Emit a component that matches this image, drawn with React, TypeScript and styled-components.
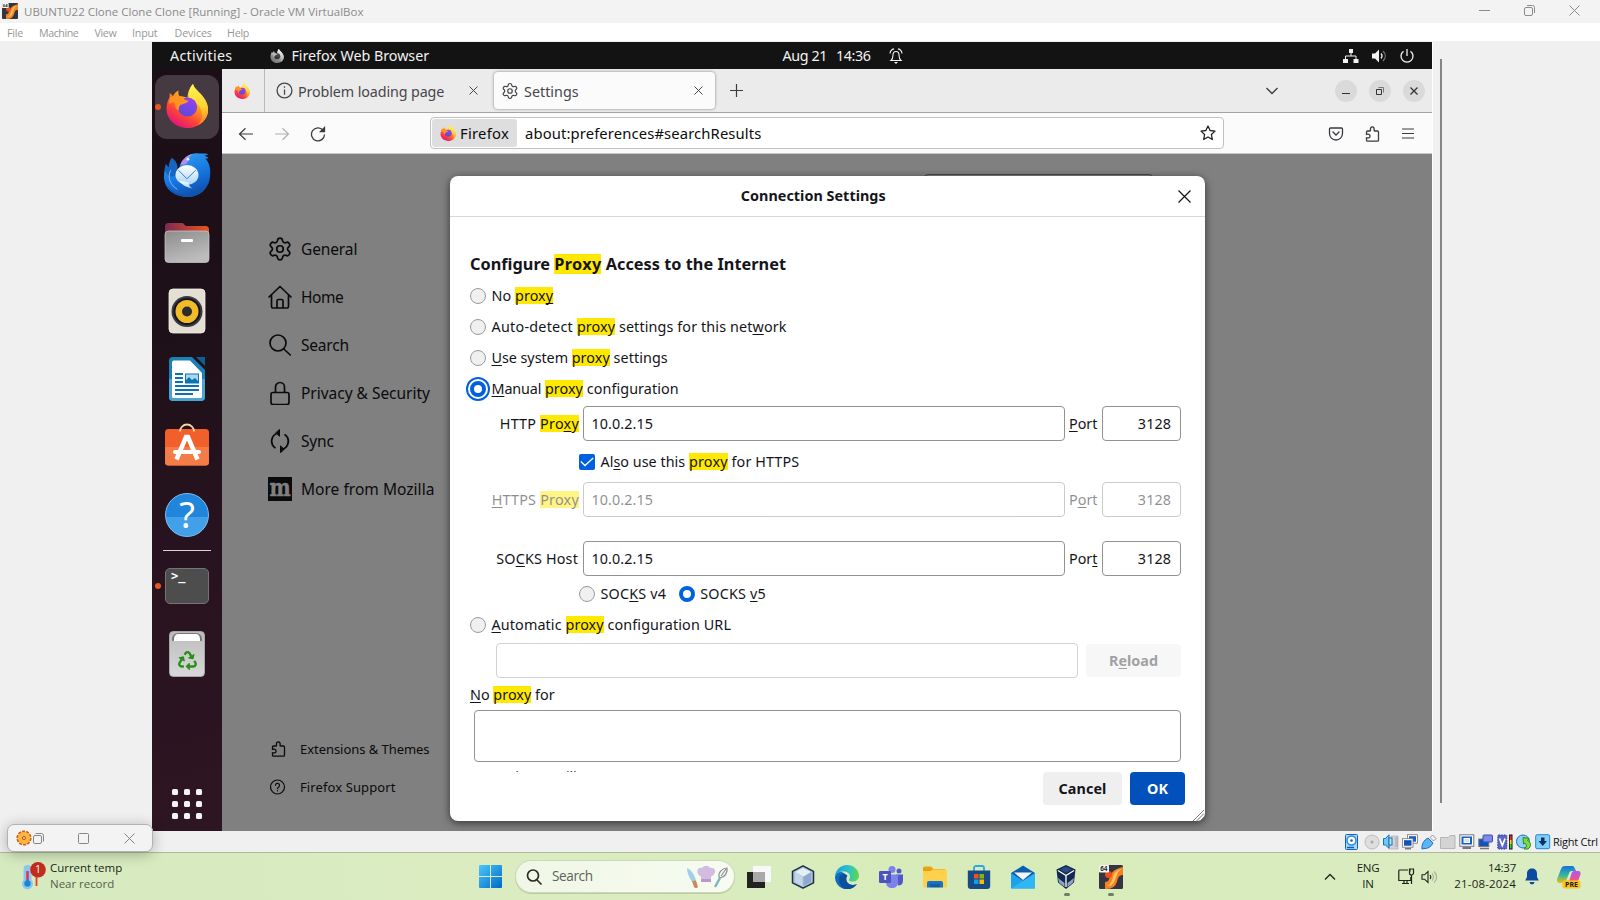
import React from 'react';
import styled, { createGlobalStyle, css } from 'styled-components';
import { Settings } from 'lucide-react';
import { FaRecycle } from 'react-icons/fa';

const GlobalStyle = createGlobalStyle`
  * { box-sizing: border-box; }
  body { margin: 0; background: #f0f0f0; overflow: hidden; }
  svg { display: block; flex: none; }
`;

const guestFont = `"Noto Sans", "Open Sans", sans-serif`;
const hostFont = `"Open Sans", "Noto Sans", sans-serif`;

/* ---------- host window ---------- */

const Screen = styled.div`
  width: 1600px;
  height: 900px;
  display: flex;
  flex-direction: column;
  background: #f0f0f0;
  font-family: ${hostFont};
  position: relative;
  overflow: hidden;
`;

const TitleBar = styled.header`
  height: 23px;
  flex: none;
  display: flex;
  align-items: center;
  background: #f3f3f3;
  padding: 0 20px 2px 2px;
  color: #8b8b8b;
  font-size: 11.5px;
`;

const WindowTitle = styled.span`
  margin-left: 6px;
  flex: 1;
  line-height: 20px;
  padding-top: 2px;
`;

const HostControls = styled.div`
  display: flex;
  align-items: center;
  gap: 34px;
`;

const MenuBar = styled.nav`
  height: 18px;
  flex: none;
  display: flex;
  align-items: center;
  background: #fff;
  color: #979797;
  font-size: 10.7px;
  padding: 2px 0 0 7px;
  line-height: 16px;
`;

const MenuItem = styled.span<{ $w: number; $ls: number }>`
  width: ${(p) => p.$w}px;
  letter-spacing: ${(p) => p.$ls}px;
  white-space: nowrap;
`;

const Viewport = styled.main`
  flex: none;
  height: 790px;
  padding: 1px 0 0 152px;
  display: flex;
`;

const Guest = styled.section`
  width: 1280px;
  height: 789px;
  display: flex;
  flex-direction: column;
  font-family: ${guestFont};
  box-shadow: 1px 0 0 #fff;
`;

const ViewportScroll = styled.div`
  width: 2px;
  height: 744px;
  margin: 17px 0 0 8px;
  background: #858585;
`;

/* ---------- guest top bar ---------- */

const TopBar = styled.div`
  height: 27px;
  flex: none;
  background: #131313;
  color: #f2f2f2;
  display: grid;
  grid-template-columns: 1fr auto 1fr;
  align-items: center;
  font-size: 14.3px;
  line-height: 26px;
  padding: 0 18px 0 18px;
`;

const TopLeft = styled.div`
  display: flex;
  align-items: center;
`;

const AppName = styled.div`
  display: flex;
  align-items: center;
  gap: 7px;
  margin-left: 38px;
  letter-spacing: -0.03px;
`;

const Clock = styled.div`
  display: flex;
  align-items: center;
  letter-spacing: -0.4px;
  margin-left: 102px;
  gap: 9px;
`;

const BellSlot = styled.div`
  margin-left: 10px;
`;

const TopRight = styled.div`
  display: flex;
  justify-content: flex-end;
  align-items: center;
  gap: 13px;
`;

const Spaced = styled.span<{ $ls: number }>`
  letter-spacing: ${(p) => p.$ls}px;
  white-space: pre;
`;

const Desktop = styled.div`
  flex: 1;
  display: flex;
  min-height: 0;
`;

/* ---------- dock ---------- */

const Dock = styled.aside`
  width: 70px;
  flex: none;
  display: flex;
  flex-direction: column;
  align-items: center;
  padding-top: 6px;
  background: linear-gradient(165deg, #1b0e17 0%, #1e1019 35%, #27131f 62%, #2e1522 100%);
`;

const DockTile = styled.div<{ $active?: boolean; $running?: boolean; $lift?: number }>`
  width: 64px;
  height: 64px;
  margin-bottom: 4px;
  padding-bottom: ${(p) => p.$lift ?? 0}px;
  border-radius: 12px;
  display: flex;
  flex: none;
  align-items: center;
  justify-content: center;
  position: relative;
  background: ${(p) => (p.$active ? '#453a41' : 'transparent')};
  ${(p) =>
    p.$running &&
    css`
      &::before {
        content: '';
        position: absolute;
        left: 0;
        top: 29px;
        width: 6px;
        height: 6px;
        border-radius: 50%;
        background: #e95420;
      }
    `}
`;

const DockRule = styled.div`
  width: 48px;
  height: 1px;
  flex: none;
  margin: -1px 0 3px;
  background: #d8d2d5;
`;

const AppGrid = styled.div`
  display: grid;
  grid-template-columns: repeat(3, 6px);
  gap: 6px;
  margin-top: auto;
  margin-bottom: 12px;
  & > i {
    height: 6px;
    border-radius: 1.5px;
    background: #f4f2f3;
  }
`;

/* ---------- browser ---------- */

const Browser = styled.div`
  flex: 1;
  display: flex;
  flex-direction: column;
  color: #15141a;
`;

const TabStrip = styled.div`
  height: 44px;
  flex: none;
  background: #ebebeb;
  border-bottom: 1px solid #a3a3a3;
  display: flex;
  align-items: center;
  font-size: 14.3px;
  color: #46464b;
`;

const PinnedTab = styled.div`
  width: 43px;
  height: 43px;
  padding-left: 12px;
  border-right: 1px solid #b9b9b9;
  display: flex;
  align-items: center;
`;

const Tab = styled.div<{ $selected?: boolean }>`
  display: flex;
  align-items: center;
  ${(p) =>
    p.$selected
      ? css`
          width: 221px;
          height: 37px;
          margin: 0 15px 0 7px;
          padding: 0 12px 0 7px;
          background: #fbfbfb;
          border-radius: 4px;
          box-shadow: 0 0 3px rgba(0, 0, 0, 0.45);
        `
      : css`
          width: 222px;
          height: 43px;
          padding: 0 9px 0 11px;
        `}
`;

const TabLabel = styled.span<{ $ls: number }>`
  flex: 1;
  padding-top: 1px;
  margin-left: 5px;
  letter-spacing: ${(p) => p.$ls}px;
  white-space: nowrap;
`;

const StripEnd = styled.div`
  margin-left: auto;
  display: flex;
  align-items: center;
  padding-right: 7px;
`;

const RoundButton = styled.div`
  width: 22px;
  height: 22px;
  margin-left: 12px;
  border-radius: 50%;
  background: #dadada;
  display: flex;
  align-items: center;
  justify-content: center;
`;

const ChevronSlot = styled.div`
  margin-right: 45px;
`;

const NavBar = styled.div`
  height: 41px;
  flex: none;
  background: #fbfbfb;
  border-bottom: 1px solid #c9c9c9;
  display: flex;
  align-items: center;
  padding: 0 16px 0 16px;
`;

const NavButtons = styled.div`
  width: 192px;
  display: flex;
  align-items: center;
  gap: 20px;
  padding-top: 1px;
`;

const UrlBar = styled.div`
  width: 794px;
  height: 32px;
  border: 1px solid #c1c1c1;
  border-radius: 4px;
  background: #fff;
  display: flex;
  align-items: center;
  padding: 0 7px 0 1px;
  font-size: 14.8px;
  line-height: 20px;
  color: #0c0c0d;
`;

const Identity = styled.div`
  width: 85px;
  height: 28px;
  margin-right: 8px;
  border-radius: 3px;
  background: #dedede;
  display: flex;
  align-items: center;
  gap: 4px;
  padding-left: 8px;
  letter-spacing: 0.25px;
`;

const UrlText = styled.span`
  flex: 1;
  letter-spacing: 0.12px;
`;

const NavTools = styled.div`
  margin-left: auto;
  display: flex;
  align-items: center;
  gap: 20px;
  padding-top: 1px;
`;

const Page = styled.div`
  flex: 1;
  background: #808080;
  position: relative;
  display: flex;
`;

const Sidebar = styled.nav`
  width: 228px;
  padding: 71px 0 0 46px;
  display: flex;
  flex-direction: column;
  color: #0b0a0d;
`;

const NavEntry = styled.div<{ $ls: number }>`
  height: 48px;
  display: flex;
  align-items: center;
  gap: 9px;
  font-size: 15.5px;
  letter-spacing: ${(p) => p.$ls}px;
  white-space: nowrap;
`;

const GearIcon = styled(Settings)`
  margin: 0 -1px;
`;

const FootEntry = styled.div`
  height: 38px;
  display: flex;
  align-items: center;
  gap: 14px;
  padding-left: 2px;
  font-size: 13px;
  white-space: nowrap;
`;

const FootNav = styled.div`
  margin-top: auto;
  margin-bottom: 25px;
`;

const PageSearch = styled.div`
  position: absolute;
  left: 702px;
  top: 20px;
  width: 229px;
  height: 32px;
  border: 1px solid #48484a;
  border-radius: 4px;
`;

/* ---------- dialog ---------- */

const Dialog = styled.div`
  position: absolute;
  left: 228px;
  top: 22px;
  width: 755px;
  height: 645px;
  background: #fff;
  border-radius: 8px;
  box-shadow: 0 2px 8px rgba(0, 0, 0, 0.6);
  display: flex;
  flex-direction: column;
  font-size: 14.35px;
`;

const DialogHead = styled.div`
  height: 41px;
  flex: none;
  border-bottom: 1px solid #d8d8da;
  display: flex;
  align-items: center;
  padding: 0 14.5px 0 0;
`;

const DialogTitle = styled.div`
  flex: 1;
  text-align: center;
  font-weight: 700;
  letter-spacing: 0.04px;
  line-height: 20px;
  padding-right: 1px;
`;

const DialogBody = styled.div`
  height: 555px;
  flex: none;
  overflow: hidden;
  padding: 37px 24px 0 20px;
  line-height: 17px;
`;

const Heading = styled.h2`
  margin: 0 0 14px;
  font-size: 16.3px;
  line-height: 20px;
  font-weight: 700;
  letter-spacing: 0.02px;
`;

const Mark = styled.mark<{ $ls?: number }>`
  display: inline-block;
  background: #ffe900;
  color: inherit;
  line-height: inherit;
  letter-spacing: ${(p) => p.$ls ?? 0.06}px;
`;

const Key = styled.u`
  text-decoration: underline;
  text-decoration-thickness: 1px;
  text-underline-offset: 2px;
  text-decoration-skip-ink: none;
`;

const Choice = styled.label`
  height: 16px;
  display: flex;
  align-items: flex-start;
  gap: 5.5px;
  white-space: pre;
`;

const ChoiceText = styled.span<{ $ls?: number }>`
  margin-top: -1px;
  letter-spacing: ${(p) => p.$ls ?? 0.08}px;
`;

const ChoiceList = styled.div`
  display: flex;
  flex-direction: column;
  gap: 15px;
`;

const Radio = styled.span<{ $checked?: boolean; $focus?: boolean }>`
  width: 16px;
  height: 16px;
  flex: none;
  border-radius: 50%;
  background: ${(p) => (p.$checked ? '#fff' : '#f0f0f0')};
  border: ${(p) => (p.$checked ? '4px solid #0060df' : '1px solid #9a9a9c')};
  ${(p) => p.$focus && 'box-shadow: 0 0 0 2px #fff, 0 0 0 4px #0060df;'}
`;

const Checkbox = styled.span`
  width: 16px;
  height: 16px;
  flex: none;
  border-radius: 2px;
  background: #0060df;
  display: flex;
  align-items: center;
  justify-content: center;
`;

const ProxyRow = styled.div<{ $top: number; $disabled?: boolean }>`
  margin-top: ${(p) => p.$top}px;
  display: grid;
  grid-template-columns: 109px 482px 29px 79px;
  column-gap: 4px;
  align-items: center;
  opacity: ${(p) => (p.$disabled ? 0.48 : 1)};
`;

const RowLabel = styled.span<{ $ls?: number; $pad?: number }>`
  text-align: right;
  white-space: pre;
  letter-spacing: ${(p) => p.$ls ?? 0.2}px;
  padding-right: ${(p) => p.$pad ?? 0}px;
`;

const Field = styled.div<{ $numeric?: boolean; $faint?: boolean }>`
  height: 35px;
  border: 1px solid ${(p) => (p.$faint ? '#d2d2d2' : '#929294')};
  border-radius: 4px;
  display: flex;
  align-items: center;
  justify-content: ${(p) => (p.$numeric ? 'flex-end' : 'flex-start')};
  padding: 0 9px 0 7.5px;
  letter-spacing: 0.08px;
`;

const Indent = styled.div<{ $left: number; $top: number }>`
  margin: ${(p) => p.$top}px 0 0 ${(p) => p.$left}px;
  display: flex;
  gap: 12.5px;
`;

const UrlRow = styled.div`
  margin: 10px 0 8px 26px;
  display: grid;
  grid-template-columns: 582px 95px;
  column-gap: 8px;
  align-items: center;
`;

const Reload = styled.div`
  height: 33px;
  border-radius: 4px;
  background: #f7f7f7;
  color: #a1a1a3;
  font-weight: 700;
  text-align: center;
  line-height: 33px;
`;

const TextArea = styled.div`
  height: 52px;
  margin: 7px 0 5px 4px;
  border: 1px solid #929294;
  border-radius: 4px;
`;

const Example = styled.div`
  line-height: 20px;
  white-space: nowrap;
  letter-spacing: -0.14px;
  color: #3c3b42;
`;

const DialogFoot = styled.div`
  flex: 1;
  display: flex;
  justify-content: flex-end;
  gap: 8px;
  padding-right: 20px;
  position: relative;
`;

const Button = styled.div<{ $primary?: boolean }>`
  width: ${(p) => (p.$primary ? 55 : 79)}px;
  height: 33px;
  border-radius: 4px;
  line-height: 33px;
  text-align: center;
  font-weight: 700;
  letter-spacing: 0.1px;
  background: ${(p) => (p.$primary ? '#0250bb' : '#efeff0')};
  color: ${(p) => (p.$primary ? '#fff' : '#15141a')};
`;

const Grip = styled.div`
  position: absolute;
  right: 1px;
  bottom: 0;
`;

/* ---------- status bar ---------- */

const StatusBar = styled.div`
  height: 21px;
  flex: none;
  display: flex;
  align-items: center;
  justify-content: flex-end;
  gap: 3px;
  padding-right: 1px;
  color: #111;
  font-size: 11px;
`;

const HostKey = styled.span`
  width: 46px;
  margin-left: -1px;
  letter-spacing: -0.25px;
  white-space: nowrap;
`;

const MiniToolbar = styled.div`
  position: absolute;
  left: 7px;
  top: 824px;
  width: 146px;
  height: 28px;
  border: 1px solid #b2b2b2;
  border-radius: 7px;
  background: #f3f3f3;
  box-shadow: 0 2px 14px rgba(0, 0, 0, 0.28);
  display: flex;
  align-items: center;
  padding-left: 8px;
`;

const MiniIcon = styled.div<{ $ml: number }>`
  margin-left: ${(p) => p.$ml}px;
`;

/* ---------- taskbar ---------- */

const Taskbar = styled.footer`
  height: 48px;
  flex: none;
  position: relative;
  border-top: 1px solid #acbb98;
  background: linear-gradient(90deg, #d6eac0 0%, #dbecc0 35%, #d7ecba 60%, #dbecc2 100%);
  display: flex;
  align-items: center;
  color: #1b1f17;
  font-size: 11.5px;
  line-height: 16px;
`;

const Weather = styled.div`
  width: 479px;
  padding-left: 20px;
  display: flex;
  align-items: center;
  gap: 3px;
`;

const WeatherText = styled.div`
  letter-spacing: -0.03px;
  padding-bottom: 2px;
  & > div + div { color: #55604c; }
`;

const SearchPill = styled.div`
  width: 218px;
  height: 31px;
  margin: 0 13px 0 14px;
  border-radius: 16px;
  background: linear-gradient(90deg, #f0f7e6, #f7fbf1);
  box-shadow: 0 0 0 1px #cbdab4, 0 1px 0 1px #bccba6;
  display: flex;
  align-items: center;
  padding: 0 5px 0 10px;
  font-size: 13.6px;
  color: #5d6357;
`;

const PillText = styled.span`
  flex: 1;
  margin-left: 10px;
  padding-bottom: 1px;
  letter-spacing: -0.4px;
`;

const AppRow = styled.div`
  display: flex;
  gap: 20px;
`;

const App24 = styled.div<{ $open?: boolean }>`
  width: 24px;
  height: 24px;
  position: relative;
  ${(p) =>
    p.$open &&
    css`
      &::after {
        content: '';
        position: absolute;
        left: 9px;
        bottom: -7px;
        width: 6px;
        height: 3px;
        border-radius: 2px;
        background: #6f7f62;
      }
    `}
`;

const Tray = styled.div`
  margin-left: auto;
  display: flex;
  align-items: center;
  padding-right: 19px;
`;

const TrayText = styled.div<{ $w: number; $align: string; $ls: number }>`
  width: ${(p) => p.$w}px;
  padding-bottom: 2px;
  text-align: ${(p) => p.$align};
  letter-spacing: ${(p) => p.$ls}px;
`;

const Gap = styled.div<{ $w: number }>`
  width: ${(p) => p.$w}px;
`;

/* ---------- drawings ---------- */

const FirefoxLogo = ({ size, id, gray }: { size: number; id: string; gray?: boolean }) => {
  const c = gray
    ? ['#f4f4f4', '#bdbdbd', '#8a8a8a', '#777', '#4a4a4a', '#333']
    : ['#fff44f', '#ffa018', '#ff4438', '#e0127d', '#9a3ff0', '#5b4bd6'];
  return (
    <svg width={size} height={size} viewBox="0 0 44 44">
      <defs>
        <linearGradient id={`${id}a`} x1="0.8" y1="0.08" x2="0.25" y2="0.98">
          <stop offset="0.05" stopColor={c[0]} />
          <stop offset="0.38" stopColor={c[1]} />
          <stop offset="0.7" stopColor={c[2]} />
          <stop offset="1" stopColor={c[3]} />
        </linearGradient>
        <linearGradient id={`${id}b`} x1="0.7" y1="0" x2="0.3" y2="1">
          <stop offset="0" stopColor={c[4]} />
          <stop offset="1" stopColor={c[5]} />
        </linearGradient>
        <linearGradient id={`${id}c`} x1="0.5" y1="0" x2="0.6" y2="1">
          <stop offset="0" stopColor={c[0]} />
          <stop offset="0.6" stopColor={gray ? '#ccc' : '#ffd030'} />
          <stop offset="1" stopColor={gray ? '#aaa' : '#ff7a28'} />
        </linearGradient>
      </defs>
      <path
        fill={`url(#${id}a)`}
        d="M28 0c1 5 7 8 10.500 13.500C42 18 43 22 43 26c0 10-9 18-20.500 18S1.500 35.500 1.500 25c0-5 1-8 3-11.500L4.800 9 8 12c1.300-2.500 3-4.300 5.500-5.500-.5 2.500 0 4.500 1 5.500 3 0 6 1 8 2 0-6 2.500-11 5.500-14z"
      />
      <path
        fill={`url(#${id}c)`}
        d="M28 0c1 5 7 8 10.500 13.500C42 18 43 22 43 26c0 7-4 12-10 15 4-5 5-10 3-15-1-5-6-8-10-10-4-3-2-11 2-16z"
      />
      <circle cx="22.500" cy="23" r="9.600" fill={`url(#${id}b)`} />
      <path
        fill={gray ? '#b5b5b5' : '#ff9420'}
        d="M5 13.500c3-1.500 6-1.500 9-1 3 .2 5 1.500 5.500 3 1.500.6 3 .8 4 1.300-.5 2-4 3-7 3.700-2.500.7-2.500 3-3 6-3-1-4-5-3.500-8-2-.5-4 0-6 1.500z"
      />
    </svg>
  );
};

const Cross = ({ size, color, w = 1 }: { size: number; color: string; w?: number }) => (
  <svg width={size} height={size} viewBox={`0 0 ${size} ${size}`} stroke={color} strokeWidth={w} fill="none">
    <path d={`M.5 .5L${size - 0.5} ${size - 0.5}M${size - 0.5} .5L.5 ${size - 0.5}`} />
  </svg>
);

const Puzzle = ({ color = '#3b3b40' }: { color?: string }) => (
  <svg width="16" height="16" viewBox="0 0 16 16" fill="none" stroke={color} strokeWidth="1.3">
    <path d="M2.500 7.600V6a1 1 0 0 1 1-1h2.400c.6 0 .7-.4.600-.9C6.200 2.600 6.800.8 8.300.8s2.100 1.800 1.800 3.300c-.1.500 0 .9.600.9h2.800a1 1 0 0 1 1 1v8.200a1 1 0 0 1-1 1h-10a1 1 0 0 1-1-1v-2.400c1.700.4 3.600.1 3.600-1.700S4.200 7.900 2.500 8.400z" />
  </svg>
);

const Thunderbird = () => (
  <svg width="48" height="46" viewBox="0 0 50 48">
    <defs>
      <linearGradient id="tb" x1="0.2" y1="0" x2="0.6" y2="1">
        <stop offset="0" stopColor="#2fa1f5" />
        <stop offset="0.6" stopColor="#1573dc" />
        <stop offset="1" stopColor="#0f4da8" />
      </linearGradient>
      <linearGradient id="tbe" x1="0" y1="0" x2="0" y2="1">
        <stop offset="0" stopColor="#fff" />
        <stop offset="1" stopColor="#a9d4fb" />
      </linearGradient>
    </defs>
    <path fill="#1566c0" d="M9 6c5 3 7 8 6 15L6 34C0 25 1 18 3 12c1 2 2 3 3 4 0-4 1-7 3-10z" />
    <path fill="url(#tb)" d="M18 13C21 5 30 0 38 1.500c3 0 7 0 9 .5-1 1-3 1.500-4 2 2 .5 4 1.500 4.500 2.500-1 0-2 .3-3 .5C49 12 50 19 49 26c-1 12-11 21-24 21S2 39 1 28c0-3 0-6 1-9 3 9 10 8 13 2z" />
    <path fill="#b58cf0" d="M18 13c3-6 7-10 13-11-4 3-5 6-6 10-3 1-5 2-7 1z" />
    <path fill="#0f55b0" d="M4 34c5 8 13 11 21 11s18-5 22-13c-3 10-12 15-22 15S7 42 4 34z" />
    <ellipse cx="25" cy="24" rx="12" ry="10.500" fill="url(#tbe)" />
    <path fill="url(#tbe)" d="M17 30c3 5 8 7 14 8-3-1-4-3-4-6z" />
    <path fill="none" stroke="#2b78cf" strokeWidth="1" d="M16 19l9 9 9-9" />
    <circle cx="26" cy="7.500" r="1.500" fill="#e6f4ff" />
    <path fill="none" stroke="#7fb6ff" d="M8 19c-4 8 0 16 7 20" />
  </svg>
);

const FilesIcon = () => (
  <svg width="46" height="42" viewBox="0 0 46 42">
    <defs>
      <linearGradient id="fa"><stop stopColor="#7d2a53" /><stop offset="1" stopColor="#e9541f" /></linearGradient>
      <linearGradient id="fb" x1="0" y1="0" x2="0.4" y2="1"><stop stopColor="#8d8d8d" /><stop offset="1" stopColor="#bcbcbc" /></linearGradient>
    </defs>
    <path fill="url(#fa)" d="M1 4.500A3.500 3.500 0 0 1 4.500 1H18c2 0 2.500 3 4.500 3h19A3.500 3.500 0 0 1 45 7.500V20H1z" />
    <rect x="1" y="9" width="44" height="31.500" rx="3.500" fill="url(#fb)" stroke="#cfcfcf" strokeWidth=".7" />
    <rect x="17" y="17" width="12" height="3" rx="1" fill="#fff" />
  </svg>
);

const MusicIcon = () => (
  <svg width="38" height="46" viewBox="0 0 38 46">
    <rect x="1" y="1" width="36" height="44" rx="4" fill="#e4dfd3" stroke="#f4f0e8" strokeWidth=".8" />
    <circle cx="19" cy="23.500" r="15.500" fill="#3a3a46" />
    <circle cx="19" cy="23.500" r="13.500" fill="#15151b" />
    <circle cx="19" cy="23.500" r="11.500" fill="#f0bd28" />
    <circle cx="19" cy="23.500" r="5" fill="#2c2c2c" />
  </svg>
);

const WriterIcon = () => (
  <svg width="38" height="46" viewBox="0 0 38 46">
    <path fill="#1b80b5" d="M5 1h19l13 13v27a4 4 0 0 1-4 4H5a4 4 0 0 1-4-4V5a4 4 0 0 1 4-4z" />
    <path fill="#4aa5d2" d="M1 23h36v18a4 4 0 0 1-4 4H5a4 4 0 0 1-4-4z" />
    <path fill="#fff" d="M5.500 4.500H22L34 17v23.500a1.500 1.500 0 0 1-1.500 1.500h-27A1.500 1.500 0 0 1 4 40.500v-34a2 2 0 0 1 1.500-2z" />
    <path fill="#0b5f92" d="M28 1h9v9z" />
    <path stroke="#0c72ae" strokeWidth="1.800" d="M7 18h8M7 22h8M7 26h8M7 30h24M7 34h24M7 38h18" />
    <rect x="17.500" y="18" width="13" height="9" fill="#a9d8f0" stroke="#0c72ae" />
    <path fill="#0c72ae" d="M18 27v-3l3-3 3 3 3-2 3 3v2z" />
  </svg>
);

const SoftwareIcon = () => (
  <svg width="46" height="46" viewBox="0 0 46 46">
    <rect x="1" y="8" width="44" height="36.500" rx="3.500" fill="#f1602a" />
    <path fill="#f47c48" d="M1 26h44v15a3.500 3.500 0 0 1-3.500 3.500h-37A3.500 3.500 0 0 1 1 41z" />
    <path fill="none" stroke="#f6d3a2" strokeWidth="1.800" d="M16 10.500a7 7 0 0 1 14 0" />
    <path fill="none" stroke="#fff" strokeWidth="4.500" d="M12.500 38.500L22 16h2l9.500 22.500" />
    <path stroke="#fff" strokeWidth="4" strokeLinecap="round" d="M11 31h24" />
  </svg>
);

const HelpGlyph = styled.div`
  width: 44px;
  height: 44px;
  border-radius: 50%;
  background: linear-gradient(#2285dc 54%, #41a0e8 55%);
  border: 1px solid #7cc0f2;
  color: #fff;
  font: 36px/42px "Noto Sans", sans-serif;
  text-align: center;
`;

const TerminalGlyph = styled.div`
  width: 44px;
  height: 36px;
  border-radius: 5px;
  background: #4d4d4d;
  border: 1px solid #747474;
  color: #fff;
  font: bold 12px/15px "DejaVu Sans Mono", monospace;
  padding-left: 5px;
`;

const TrashIcon = styled.div`
  width: 36px;
  height: 46px;
  border-radius: 4px;
  background: linear-gradient(#bdbdbd, #d8d8d8);
  border: 1px solid #a5a5a5;
  color: #279018;
  display: flex;
  flex-direction: column;
  align-items: center;
`;

const TrashSlot = styled.div`
  width: 30px;
  height: 8px;
  margin: 1px 0 10px;
  background: #fff;
  border: solid #777;
  border-width: 1px 2px 0;
  border-radius: 6px 6px 1px 1px;
`;

const MozillaBox = () => (
  <svg width="24" height="24" viewBox="0 0 24 24">
    <rect width="24" height="24" fill="#0b0a0d" />
    <text x="12" y="15" transform="scale(1 1.25)" fontSize="20" fontWeight="bold" textAnchor="middle" letterSpacing="0" fontFamily="DejaVu Serif, serif" fill="#808080" stroke="#808080" strokeWidth=".4">m</text>
  </svg>
);

const lineIcon = { fill: 'none', stroke: '#0b0a0d', strokeWidth: 1.7, strokeLinecap: 'round', strokeLinejoin: 'round' } as const;

const VmIcon = ({ size }: { size: number }) => (
  <svg width={size} height={size} viewBox="0 0 24 24">
    <rect width="24" height="24" rx="1.500" fill="#343540" />
    <path fill="#f58220" d="M24 2v8c-6 0-5 6-7 9-2 4-6 5-11 5v-7c4 0 4-3 5-6 2-5 7-8 13-9z" />
    <path fill="#ffc163" d="M23 4c-6 1-8 4-9 8s-3 8-6 9c5 0 6-2 8-6s2-9 7-11z" />
    <circle cx="9.500" cy="9.500" r="3.500" fill="#e8501c" />
    <rect width="10" height="7.500" rx="1" fill="#f5f5f5" />
    <text x="1.200" y="6.200" fontSize="6.500" fontWeight="bold" fontFamily="Liberation Sans, sans-serif" fill="#222">64</text>
  </svg>
);

const StatusIcon = ({ children }: { children: React.ReactNode }) => (
  <svg width="16" height="16" viewBox="0 0 16 16">{children}</svg>
);

const StatusIcons = () => (
  <>
    <StatusIcon>
      <rect x=".5" y=".5" width="12" height="15" rx="1" fill="#a4daff" stroke="#1a62b8" />
      <circle cx="6.500" cy="6.500" r="4.500" fill="#fff" stroke="#2f86dc" strokeWidth="1.500" />
      <circle cx="6.500" cy="6.500" r="1.300" fill="#1560b0" />
      <path stroke="#1560b0" strokeWidth="1.500" d="M2 13.500h7" />
    </StatusIcon>
    <StatusIcon>
      <circle cx="8" cy="8" r="7" fill="#dedede" stroke="#bdbdbd" />
      <circle cx="8" cy="8" r="1.500" fill="#a8a8a8" />
    </StatusIcon>
    <StatusIcon>
      <path fill="#d2d2d2" stroke="#aaa" strokeWidth=".6" d="M8 2h7v13H6z" />
      <path stroke="#999" strokeWidth=".8" d="M12 4h3M12 6h3M12 8h3M12 10h3M12 12h3" />
      <path fill="#6cc9f8" stroke="#1b6fc0" d="M.5 4.500h2L6 .8v13.500L2.500 11h-2z" />
      <rect x="6" y="4" width="3" height="7" fill="#b9e6ff" stroke="#1b6fc0" />
    </StatusIcon>
    <StatusIcon>
      <rect x="5.500" y=".7" width="10" height="8.500" fill="#fff" stroke="#777" strokeWidth=".8" />
      <rect x="7" y="2.200" width="7" height="5.500" fill="#1760c4" />
      <rect x=".5" y="4.700" width="10.500" height="8.500" fill="#fff" stroke="#777" strokeWidth=".8" />
      <rect x="2" y="6.200" width="7.500" height="5.500" fill="#0f55b8" />
      <path stroke="#777" strokeWidth="1.500" d="M3 14.700h6" />
    </StatusIcon>
    <StatusIcon>
      <path fill="#5bb4f4" stroke="#1b6fc0" d="M1 15c-.5-5 2-9 6-11l5 5c-2 4-6 6-9 5.500z" />
      <path fill="#f4f4f4" stroke="#777" strokeWidth=".8" d="M9 3.500L11.500 1 15 4.500 12.500 7z" />
    </StatusIcon>
    <StatusIcon>
      <path fill="#d4d4d4" stroke="#b5b5b5" d="M.5 3.500h8l1.500-2h5v13H.5z" />
    </StatusIcon>
    <StatusIcon>
      <rect x=".8" y=".8" width="14" height="11.500" fill="#fff" stroke="#777" />
      <rect x="2.500" y="2.500" width="10.500" height="8" fill="#1760c4" />
      <rect x="5" y="4.500" width="5.500" height="4" fill="#cfe4fb" stroke="#fff" />
      <path stroke="#777" strokeWidth="2" d="M3.500 14h8.500" />
    </StatusIcon>
    <StatusIcon>
      <rect x=".8" y="5" width="10" height="7.500" fill="#0f55b8" stroke="#777" />
      <rect x="5" y="1" width="9.500" height="7" rx="1" fill="#7d8ae8" stroke="#3b4fb0" />
      <path stroke="#777" strokeWidth="1.500" d="M2 14.500h9" />
    </StatusIcon>
    <StatusIcon>
      <rect x=".8" y="1" width="9" height="14" rx="1" fill="#5a68c8" stroke="#2f3c96" strokeDasharray="1.500 1" />
      <path fill="none" stroke="#fff" strokeWidth="1.700" d="M2.500 4.500l2.800 7 2.800-7" />
      <rect x="12" y=".5" width="3.500" height="15" fill="#111" />
      <rect x="12.800" y="1.500" width="1.800" height="4.500" fill="#f03020" />
      <rect x="12.800" y="6" width="1.800" height="4" fill="#f0e020" />
      <rect x="12.800" y="10" width="1.800" height="4.500" fill="#30d030" />
    </StatusIcon>
    <StatusIcon>
      <circle cx="7" cy="7.500" r="6.500" fill="#8ad4f8" stroke="#2470b8" />
      <path fill="#7ddc3c" stroke="#2f8a1c" d="M7 3.500l6 1-1.500 2c4 2 4 6 .5 8.500H8c3-2 3-4 1-6L7.500 10z" />
    </StatusIcon>
    <StatusIcon>
      <rect x=".7" y=".7" width="14" height="14" rx="1.500" fill="#7fd0fb" stroke="#2a86c8" />
      <path fill="#12315f" d="M6 3.500h3.500V7H12l-4.300 5L3.500 7H6z" />
    </StatusIcon>
  </>
);

const mark = (t: React.ReactNode, ls?: number) => <Mark $ls={ls}>{t}</Mark>;

/* ---------- sections ---------- */

const DockPanel = () => (
  <Dock>
    <DockTile $active $running $lift={2}><FirefoxLogo size={44} id="dock" /></DockTile>
    <DockTile><Thunderbird /></DockTile>
    <DockTile><FilesIcon /></DockTile>
    <DockTile><MusicIcon /></DockTile>
    <DockTile><WriterIcon /></DockTile>
    <DockTile $lift={6}><SoftwareIcon /></DockTile>
    <DockTile><HelpGlyph>?</HelpGlyph></DockTile>
    <DockRule />
    <DockTile $running><TerminalGlyph>&gt;_</TerminalGlyph></DockTile>
    <DockTile><TrashIcon><TrashSlot /><FaRecycle size={19} /></TrashIcon></DockTile>
    <AppGrid>{Array.from({ length: 9 }, (_, i) => <i key={i} />)}</AppGrid>
  </Dock>
);

const GuestBar = () => (
  <TopBar>
    <TopLeft>
      <Spaced $ls={0.28}>Activities</Spaced>
      <AppName><FirefoxLogo size={14} id="top" gray />Firefox Web Browser</AppName>
    </TopLeft>
    <Clock>
      <span>Aug 21</span>
      <span>14:36</span>
      <BellSlot>
        <svg width="14" height="16" viewBox="0 0 14 16" fill="none" stroke="#f2f2f2" strokeWidth="1.100">
          <path d="M2 12.500c1.500-1.200 2-3 2-5.500C4 4.800 5.200 3.500 7 3.500S10 4.800 10 7c0 2.500.5 4.300 2 5.500zM1 5.500C1.300 3 2.800 1.300 5 .9M13 5.500C12.700 3 11.200 1.300 9 .9" />
          <path fill="#f2f2f2" stroke="none" d="M5 14h4l-2 2z" />
        </svg>
      </BellSlot>
    </Clock>
    <TopRight>
      <svg width="16" height="14" viewBox="0 0 16 14" fill="#f2f2f2">
        <path d="M6 0h4v4H6zM0 10h5v4H0zM10.500 10h5v4h-5z" />
        <path fill="none" stroke="#f2f2f2" d="M8 4v3M2.500 10V7h10.500v3" />
      </svg>
      <svg width="15" height="14" viewBox="0 0 15 14" fill="#f2f2f2">
        <path d="M0 4.500h3L7 .5v13l-4-4H0z" />
        <path fill="none" stroke="#f2f2f2" strokeWidth="1.200" d="M9 4.500c1.300 1.500 1.300 3.500 0 5" />
        <path fill="none" stroke="#777" strokeWidth="1.200" d="M11 2c3 3 3 7 0 10" />
      </svg>
      <svg width="14" height="14" viewBox="0 0 14 14" fill="none" stroke="#f2f2f2" strokeWidth="1.300">
        <path d="M7 0v7M3.500 2.200a6 6 0 1 0 7 0" />
      </svg>
    </TopRight>
  </TopBar>
);

const Tabs = () => (
  <TabStrip>
    <PinnedTab><FirefoxLogo size={16} id="pin" /></PinnedTab>
    <Tab>
      <svg width="17" height="17" viewBox="0 0 16 16" fill="none" stroke="#46464b" strokeWidth="1.200">
        <circle cx="8" cy="8" r="7" /><path d="M8 7v5M8 4v1.500" />
      </svg>
      <TabLabel $ls={-0.11}>Problem loading page</TabLabel>
      <Cross size={9} color="#46464b" />
    </Tab>
    <Tab $selected>
      <Settings size={18} color="#46464b" strokeWidth={1.6} />
      <TabLabel $ls={0.03}>Settings</TabLabel>
      <Cross size={9} color="#46464b" />
    </Tab>
    <svg width="13" height="13" viewBox="0 0 13 13" stroke="#3b3b40" strokeWidth="1.200"><path d="M6.500 0v13M0 6.500h13" /></svg>
    <StripEnd>
      <ChevronSlot>
        <svg width="12" height="8" viewBox="0 0 12 8" fill="none" stroke="#3b3b40" strokeWidth="1.300"><path d="M.5 1L6 6.500 11.500 1" /></svg>
      </ChevronSlot>
      <RoundButton><svg width="8" height="8" viewBox="0 0 8 8"><path fill="#333" d="M0 6h8v1H0z" /></svg></RoundButton>
      <RoundButton>
        <svg width="8" height="8" viewBox="0 0 8 8" fill="none" stroke="#333"><path d="M.5 2.500h5v5h-5z" /><path stroke="#777" d="M2.500 .5h5v5" /></svg>
      </RoundButton>
      <RoundButton><Cross size={8} color="#333" w={1.3} /></RoundButton>
    </StripEnd>
  </TabStrip>
);

const Toolbar = () => (
  <NavBar>
    <NavButtons>
      <svg width="16" height="14" viewBox="0 0 16 14" fill="none" stroke="#3b3b40" strokeWidth="1.200"><path d="M15 7H1.500M7.500 1.200L1.500 7l6 5.800" /></svg>
      <svg width="16" height="14" viewBox="0 0 16 14" fill="none" stroke="#b0b0b3" strokeWidth="1.200"><path d="M1 7h13.500M8.500 1.200l6 5.800-6 5.800" /></svg>
      <svg width="16" height="16" viewBox="0 0 16 16" fill="none" stroke="#3b3b40" strokeWidth="1.300">
        <path d="M13 4.200A6.500 6.500 0 1 0 14.500 8.500" /><path fill="#3b3b40" d="M14.500 1.500v4h-4z" />
      </svg>
    </NavButtons>
    <UrlBar>
      <Identity><FirefoxLogo size={16} id="url" />Firefox</Identity>
      <UrlText>about:preferences#searchResults</UrlText>
      <svg width="16" height="16" viewBox="0 0 16 16" fill="none" stroke="#222226" strokeWidth="1.300" strokeLinejoin="round">
        <path d="M8 1l2.100 4.500 4.900.6-3.600 3.400.9 5L8 12l-4.300 2.500.9-5L1 6.100l4.900-.6z" />
      </svg>
    </UrlBar>
    <NavTools>
      <svg width="16" height="16" viewBox="0 0 16 16" fill="none" stroke="#3b3b40" strokeWidth="1.300" strokeLinecap="round">
        <path d="M2.500 2h11a1 1 0 0 1 1 1v4.500a6.500 6.500 0 0 1-13 0V3a1 1 0 0 1 1-1z" /><path d="M5 6l3 3 3-3" />
      </svg>
      <Puzzle />
      <svg width="16" height="16" viewBox="0 0 16 16" stroke="#3b3b40" strokeWidth="1.200"><path d="M2 3h12M2 7.500h12M2 12h12" /></svg>
    </NavTools>
  </NavBar>
);

const PrefsSidebar = () => (
  <Sidebar>
    <NavEntry $ls={-0.12}><GearIcon size={26} strokeWidth={1.6} />General</NavEntry>
    <NavEntry $ls={-0.42}>
      <svg width="24" height="24" viewBox="0 0 24 24" {...lineIcon}><path d="M1 12L12 1.500 23 12M3.500 10v11.500a1.500 1.500 0 0 0 1.500 1.500h14a1.500 1.500 0 0 0 1.500-1.500V10M9 23v-7a1.500 1.500 0 0 1 1.500-1.500h3A1.500 1.500 0 0 1 15 16v7" /></svg>
      Home
    </NavEntry>
    <NavEntry $ls={-0.2}>
      <svg width="24" height="24" viewBox="0 0 24 24" {...lineIcon}><circle cx="10" cy="10" r="8" /><path d="M15.800 16l6.500 6" /></svg>
      Search
    </NavEntry>
    <NavEntry $ls={-0.02}>
      <svg width="24" height="24" viewBox="0 0 24 24" {...lineIcon}><rect x="3" y="11.500" width="18" height="12" rx="2" /><path d="M7.500 11V6a4.500 4.500 0 0 1 9 0v5" /></svg>
      Privacy &amp; Security
    </NavEntry>
    <NavEntry $ls={-0.2}>
      <svg width="24" height="24" viewBox="0 0 24 24" {...lineIcon}>
        <path d="M11 4C5 4.500 2 11 4.500 16c.7 1.300 1.500 2 2.500 2.700M13 20.500c6-.5 9-7 6.500-12-.7-1.300-1.500-2-2.500-2.700" />
        <path fill="#0b0a0d" strokeWidth="1" d="M11.500 .8v6.400L8 4zM12.500 17.300v6.400L16 20.500z" />
      </svg>
      Sync
    </NavEntry>
    <NavEntry $ls={0.03}><MozillaBox />More from Mozilla</NavEntry>
    <FootNav>
      <FootEntry><Puzzle color="#0b0a0d" /><Spaced $ls={-0.05}>Extensions &amp; Themes</Spaced></FootEntry>
      <FootEntry>
        <svg width="16" height="16" viewBox="0 0 16 16" {...lineIcon} strokeWidth="1.200"><circle cx="7.500" cy="8" r="7" /><path d="M5.500 6.300a2 2 0 1 1 3.200 1.600C7.800 8.500 7.500 8.800 7.500 9.700M7.500 11.600v.2" /></svg>
        <Spaced $ls={0.1}>Firefox Support</Spaced>
      </FootEntry>
    </FootNav>
  </Sidebar>
);

const ConnectionDialog = () => (
  <Dialog>
    <DialogHead>
      <DialogTitle>Connection Settings</DialogTitle>
      <Cross size={13} color="#15141a" w={1.2} />
    </DialogHead>
    <DialogBody>
      <Heading>Configure {mark('Proxy', 0.3)} Access to the Internet</Heading>
      <ChoiceList>
        <Choice><Radio /><ChoiceText>No {mark(<>prox<Key>y</Key></>)}</ChoiceText></Choice>
        <Choice><Radio /><ChoiceText $ls={0.12}><Spaced $ls={0.25}>Auto-detect </Spaced>{mark('proxy')} settings for this net<Key>w</Key>ork</ChoiceText></Choice>
        <Choice><Radio /><ChoiceText $ls={0.08}><Spaced $ls={-0.04}><Key>U</Key>se system </Spaced>{mark('proxy')} settings</ChoiceText></Choice>
        <Choice><Radio $checked $focus /><ChoiceText><Spaced $ls={-0.12}><Key>M</Key>anual </Spaced>{mark('proxy')} configuration</ChoiceText></Choice>
      </ChoiceList>
      <ProxyRow $top={9}>
        <RowLabel>HTTP {mark(<>Pro<Key>x</Key>y</>, 0.25)}</RowLabel>
        <Field>10.0.2.15</Field>
        <span><Key>P</Key>ort</span>
        <Field $numeric>3128</Field>
      </ProxyRow>
      <Indent $left={109} $top={13}>
        <Choice>
          <Checkbox>
            <svg width="14" height="10" viewBox="0 0 14 10" fill="none" stroke="#fff" strokeWidth="1.300"><path d="M.8 4.500L5 8.500 13.200 1" /></svg>
          </Checkbox>
          <ChoiceText $ls={0.1}><Spaced $ls={0.03}>Al<Key>s</Key>o use this </Spaced>{mark('proxy', 0.2)} for HTTPS</ChoiceText>
        </Choice>
      </Indent>
      <ProxyRow $top={12} $disabled>
        <RowLabel><Key>H</Key>TTPS {mark('Proxy', 0.25)}</RowLabel>
        <Field>10.0.2.15</Field>
        <span>P<Key>o</Key>rt</span>
        <Field $numeric>3128</Field>
      </ProxyRow>
      <ProxyRow $top={24}>
        <RowLabel $ls={0.18} $pad={1}>SO<Key>C</Key>KS Host</RowLabel>
        <Field>10.0.2.15</Field>
        <span>Por<Key>t</Key></span>
        <Field $numeric>3128</Field>
      </ProxyRow>
      <Indent $left={109} $top={10}>
        <Choice><Radio /><ChoiceText $ls={0.2}>SOC<Key>K</Key>S v4</ChoiceText></Choice>
        <Choice><Radio $checked /><ChoiceText $ls={0.2}>SOCKS <Key>v</Key>5</ChoiceText></Choice>
      </Indent>
      <Indent $left={0} $top={15}>
        <Choice><Radio /><ChoiceText $ls={0.12}><Key>A</Key>utomatic {mark('proxy')} configuration URL</ChoiceText></Choice>
      </Indent>
      <UrlRow>
        <Field $faint />
        <Reload>R<Key>e</Key>load</Reload>
      </UrlRow>
      <div><Key>N</Key>o {mark('proxy')} for</div>
      <TextArea />
      <Example>Example: .mozilla.org, .net.nz, 192.168.1.0/24</Example>
    </DialogBody>
    <DialogFoot>
      <Button>Cancel</Button>
      <Button $primary>OK</Button>
      <Grip>
        <svg width="11" height="11" viewBox="0 0 11 11" stroke="#777" strokeWidth="1"><path d="M0 11L11 0M3.500 11L11 3.500M7 11l4-4" /></svg>
      </Grip>
    </DialogFoot>
  </Dialog>
);

const TaskApps = () => (
  <AppRow>
    <App24>
      <svg width="24" height="24" viewBox="0 0 24 24">
        <rect x="6" y="1" width="18" height="16" fill="#f8f8f8" />
        <rect x="0" y="7" width="18" height="16" fill="#222" />
        <rect x="6" y="7" width="12" height="10" fill="#a9a9a9" />
      </svg>
    </App24>
    <App24>
      <svg width="24" height="24" viewBox="0 0 24 24">
        <path fill="#a9c4d6" stroke="#1d2d4d" strokeWidth="1.500" strokeLinejoin="round" d="M12 .8l10.500 5.500v11.500L12 23.200 1.500 17.800V6.300z" />
        <path fill="#e4f1f4" d="M12 3l8 4-8 4.500L4 7z" />
        <path fill="#c5d6e8" d="M4 7.500l7.500 4.500v9L4 17z" />
        <path fill="#8fa9ce" d="M20 7.500L12.500 12v9l7.500-4z" />
      </svg>
    </App24>
    <App24>
      <svg width="24" height="24" viewBox="0 0 24 24">
        <defs>
          <linearGradient id="eg" x1="0" x2="1" y1=".2" y2=".3"><stop stopColor="#1b9de2" /><stop offset=".6" stopColor="#2fc4c4" /><stop offset="1" stopColor="#5fd84c" /></linearGradient>
        </defs>
        <path fill="#0f6cbd" d="M0 12a12 12 0 0 0 22 7c-3 1.500-8 1.500-10-2-1-2-1-4 0-6C8 5 1 6 0 12z" />
        <path fill="#0c4f9c" d="M4 14c0 6 4 10 8 10 4 0 8-2 10-5-3 1.500-8 1.500-10-2-1-2-1.500-4 .5-6.500C9 8 4 9 4 14z" />
        <path fill="url(#eg)" d="M0 12C0 5 5.500 0 12 0s12 5 12 10.500c0 4-3 6-6 6-2 0-4-.5-4-1.500s1-1 1-3.500c0-3-3-5-6.500-5S1 8.500 0 12z" />
      </svg>
    </App24>
    <App24>
      <svg width="24" height="24" viewBox="0 0 24 24">
        <circle cx="20" cy="6" r="2.500" fill="#5059c9" />
        <path fill="#5059c9" d="M17 9.500h7V16c0 3-2 4.500-5 4.500z" />
        <circle cx="13" cy="4.500" r="3.500" fill="#7b83eb" />
        <path fill="#7b83eb" d="M7 9.500h12V17c0 4-2.500 6-6 6s-6-2-6-6z" />
        <rect y="6" width="12" height="12" rx="1.200" fill="#4b53bc" />
        <text x="6" y="15" fontSize="9" fontWeight="bold" textAnchor="middle" fontFamily="Open Sans, sans-serif" fill="#fff">T</text>
      </svg>
    </App24>
    <App24>
      <svg width="24" height="24" viewBox="0 0 24 24">
        <path fill="#e8a30c" d="M0 3a1.500 1.500 0 0 1 1.500-1.500H8L10.500 4H22v4H0z" />
        <rect y="4.500" width="24" height="18" rx="1.500" fill="#ffd04c" />
        <path fill="#e8a30c" d="M0 3h10l-2 3H0z" />
        <path fill="#1473c8" d="M4 22.500V18a2 2 0 0 1 2-2h12a2 2 0 0 1 2 2v4.500h-3V20H7v2.500z" />
        <rect x="7" y="19" width="10" height="3.500" fill="#0f5ea8" />
      </svg>
    </App24>
    <App24>
      <svg width="24" height="24" viewBox="0 0 24 24">
        <path fill="none" stroke="#2aa8e8" strokeWidth="1.800" d="M7 6V3a2 2 0 0 1 2-2h6a2 2 0 0 1 2 2v3" />
        <path fill="#1a4a84" d="M.8 5.500h22.400V21a3 3 0 0 1-3 3H3.800a3 3 0 0 1-3-3z" />
        <path fill="#f25022" d="M7 9h4.500v4.500H7z" /><path fill="#7fba00" d="M12.500 9H17v4.500h-4.500z" />
        <path fill="#00a4ef" d="M7 14.500h4.500V19H7z" /><path fill="#ffb900" d="M12.500 14.500H17V19h-4.500z" />
      </svg>
    </App24>
    <App24>
      <svg width="24" height="24" viewBox="0 0 24 24">
        <path fill="#0d5db0" d="M0 8l12-7.500L24 8v8H0z" />
        <path fill="#1fa0ea" d="M0 8l24 15.500H0z" />
        <path fill="#2fb6f4" d="M24 8L0 23.500h24z" />
        <path fill="#f2f6fb" d="M3 7.500h18l-9 7.500z" />
      </svg>
    </App24>
    <App24 $open>
      <svg width="22" height="24" viewBox="1 0 22 24">
        <path fill="#13284e" d="M12 0l9.500 4.500-1.500 13L12 24l-8-6.500-1.500-13z" />
        <path fill="#8fa5bf" d="M4 13l6.500 5v4L5 17.500zM20 13l-6.500 5v4l5.500-4.500z" />
        <path fill="none" stroke="#fff" strokeWidth="1.300" d="M4 5.500l8 5 8-5M12 10.500V22" />
        <path fill="#294d86" d="M12 1.500l6 3L12 8 6 4.500z" />
      </svg>
    </App24>
    <App24 $open><VmIcon size={24} /></App24>
  </AppRow>
);

const HostTaskbar = () => (
  <Taskbar>
    <Weather>
      <svg width="27" height="30" viewBox="0 1 27 30">
        <path fill="#8ec6f2" d="M3.500 8a4 4 0 0 1 8 0v11a5.500 5.500 0 1 1-8 0z" />
        <path stroke="#d03a5a" strokeWidth="2.500" d="M7.500 10v10" />
        <circle cx="7.500" cy="22.500" r="3.200" fill="#1488d8" />
        <path stroke="#f03a20" strokeWidth="1.800" d="M16.500 14v11" />
        <circle cx="18" cy="8.800" r="7.800" fill="#c42b1c" />
        <text x="18" y="12.300" fill="#fff" fontSize="10.500" textAnchor="middle" fontFamily="Open Sans, sans-serif">1</text>
      </svg>
      <WeatherText><div>Current temp</div><div>Near record</div></WeatherText>
    </Weather>
    <svg width="23" height="23" viewBox="0 0 23 23">
      <defs><linearGradient id="ws" x1="0" y1="0" x2="1" y2="1"><stop stopColor="#4cc8fb" /><stop offset="1" stopColor="#0067c8" /></linearGradient></defs>
      <path fill="url(#ws)" d="M1 0h10v11H0V1a1 1 0 0 1 1-1zM12 0h10a1 1 0 0 1 1 1v10H12zM0 12h11v11H1a1 1 0 0 1-1-1zM12 12h11v10a1 1 0 0 1-1 1H12z" />
    </svg>
    <SearchPill>
      <svg width="16" height="16" viewBox="0 0 16 16" fill="none" stroke="#2a2d27" strokeWidth="1.700" strokeLinecap="round"><circle cx="7" cy="6.500" r="5.500" /><path d="M11 11l4 4" /></svg>
      <PillText>Search</PillText>
      <svg width="43" height="24" viewBox="0 0 43 24">
        <path fill="#9fd0ea" d="M1 3c5 2 8 8 9 13l-4 1C3 12 1 8 1 3z" />
        <path fill="#c98a5a" d="M6 16l4-.5L12 22c-1 1.500-3 1.500-4 0z" />
        <path fill="#d2bde0" d="M12 9c-2-4 1-7 4-6 2-3 7-3 8 0 4-1 7 3 4 6-1 2-2 2-3 2.500V17H15v-5.500c-1 0-2-1-3-2.500z" />
        <path fill="#b79acb" d="M15 14h10v3H15z" />
        <path fill="none" stroke="#8b9098" strokeWidth="1.200" d="M33 12c-1-5 4-9 8-9 1 4-2 9-7 10zM35 11l5-7M37 12c3-2 4-5 4-8" />
        <path stroke="#79b8c4" strokeWidth="2.500" d="M34 13l-5 9" />
      </svg>
    </SearchPill>
    <TaskApps />
    <Tray>
      <svg width="12" height="8" viewBox="0 0 12 8" fill="none" stroke="#20251b" strokeWidth="1.300"><path d="M1 6.500l5-5 5 5" /></svg>
      <Gap $w={20} />
      <TrayText $w={24} $align="center" $ls={-0.3}>ENG<br />IN</TrayText>
      <Gap $w={18} />
      <svg width="17" height="17" viewBox="0 0 17 17" fill="none" stroke="#20251b" strokeWidth="1.200">
        <path d="M10 2H1.600a.8.8 0 0 0-.8.800V12.500h12V9M4 15.500h7M6 12.500v3M9 12.500v3M13.500 6.500V16M11.500 1h4v4a2 2 0 0 1-4 0zM12 .5v3" />
      </svg>
      <Gap $w={6} />
      <svg width="17" height="14" viewBox="0 0 17 14" fill="none" stroke="#20251b" strokeWidth="1.100">
        <path d="M1 4.800h2.500L7 1.500v11L3.500 9.200H1z" /><path d="M9 5c1 1.200 1 2.800 0 4" />
        <path stroke="#a6b396" d="M11 3.500c2 2 2 5 0 7M13 1.500c3.500 3 3.500 8 0 11" />
      </svg>
      <Gap $w={10} />
      <TrayText $w={68} $align="right" $ls={0.05}><Spaced $ls={-0.25}>14:37</Spaced><br /><Spaced $ls={0.17}>21-08-2024</Spaced></TrayText>
      <Gap $w={9} />
      <svg width="14" height="17" viewBox="0 0 14 17" fill="#0c4aa0"><path d="M7 .5c3 0 5 2 5 5V9l1.800 3.500H.2L2 9V5.500C2 2.500 4 .5 7 .5zM4.500 14h5a2.500 2.500 0 0 1-5 0z" /></svg>
      <Gap $w={18} />
      <svg width="24" height="24" viewBox="0 0 24 24">
        <defs>
          <linearGradient id="ca" x1="0" y1="0" x2="0" y2="1"><stop stopColor="#1a6fe0" /><stop offset=".5" stopColor="#2fb4a0" /><stop offset="1" stopColor="#e8c020" /></linearGradient>
          <linearGradient id="cb" x1="0" y1="0" x2="0" y2="1"><stop stopColor="#b05ae8" /><stop offset=".6" stopColor="#e8509a" /><stop offset="1" stopColor="#f58a4a" /></linearGradient>
        </defs>
        <path fill="url(#ca)" d="M8 1h7c2 0 2.500 1.500 3 3l1 2h-4c-2 0-2.500 1-3 2.500L9 16c-.5 1.500-1 2-3 2H3c-3 0-3.500-2-2.500-5L4 4c.7-2 1.800-3 4-3z" />
        <path fill="url(#cb)" d="M17 6h4c2.500 0 3 2 2.300 4L21 16c-.7 2-1.500 3-3.500 3H10c1-.5 1.500-1 2-2.500l2.500-8C15 7 15.500 6 17 6z" />
        <rect x="5.500" y="15.500" width="18" height="8" rx="2" fill="#fdc21c" />
        <text x="14.500" y="22" fontSize="7" fontWeight="bold" textAnchor="middle" fontFamily="Open Sans, sans-serif" fill="#222">PRE</text>
      </svg>
    </Tray>
  </Taskbar>
);

export default function App() {
  return (
    <Screen>
      <GlobalStyle />
      <TitleBar>
        <VmIcon size={16} />
        <WindowTitle>UBUNTU22 Clone Clone Clone [Running] - Oracle VM VirtualBox</WindowTitle>
        <HostControls>
          <svg width="11" height="11" viewBox="0 0 11 11"><path fill="#8b8b8b" d="M0 5h11v1H0z" /></svg>
          <svg width="11" height="11" viewBox="0 0 11 11" fill="none" stroke="#8b8b8b"><rect x=".5" y="2.500" width="8" height="8" rx="1.500" /><path d="M3 .5h5.500a2 2 0 0 1 2 2V8" /></svg>
          <Cross size={11} color="#8b8b8b" />
        </HostControls>
      </TitleBar>
      <MenuBar>
        <MenuItem $w={32} $ls={-0.2}>File</MenuItem>
        <MenuItem $w={55.500} $ls={-0.45}>Machine</MenuItem>
        <MenuItem $w={37.500} $ls={-0.35}>View</MenuItem>
        <MenuItem $w={42.500} $ls={-0.2}>Input</MenuItem>
        <MenuItem $w={52.500} $ls={-0.1}>Devices</MenuItem>
        <MenuItem $w={30} $ls={-0.25}>Help</MenuItem>
      </MenuBar>
      <Viewport>
        <Guest>
          <GuestBar />
          <Desktop>
            <DockPanel />
            <Browser>
              <Tabs />
              <Toolbar />
              <Page>
                <PrefsSidebar />
                <PageSearch />
                <ConnectionDialog />
              </Page>
            </Browser>
          </Desktop>
        </Guest>
        <ViewportScroll />
      </Viewport>
      <StatusBar>
        <StatusIcons />
        <HostKey>Right Ctrl</HostKey>
      </StatusBar>
      <HostTaskbar />
      <MiniToolbar>
        <svg width="16" height="16" viewBox="0 0 16 16">
          <circle cx="8" cy="8" r="6.700" fill="#fbb540" stroke="#cf5a14" strokeWidth="1.800" strokeDasharray="2.900 1.300" />
          <circle cx="8" cy="8" r="6" fill="#fbb540" />
          <circle cx="8" cy="8" r="1.500" fill="#fbe0a0" stroke="#c04a10" />
        </svg>
        <MiniIcon $ml={1}>
          <svg width="11" height="11" viewBox="0 0 11 11" fill="none" stroke="#858585"><rect x=".5" y="2.500" width="8" height="8" rx="1.500" /><path d="M2.500 .5h6a2 2 0 0 1 2 2v6" /></svg>
        </MiniIcon>
        <MiniIcon $ml={34}>
          <svg width="11" height="11" viewBox="0 0 11 11" fill="none" stroke="#858585"><rect x=".5" y=".5" width="10" height="10" rx="1" /></svg>
        </MiniIcon>
        <MiniIcon $ml={35}><Cross size={11} color="#858585" /></MiniIcon>
      </MiniToolbar>
    </Screen>
  );
}
